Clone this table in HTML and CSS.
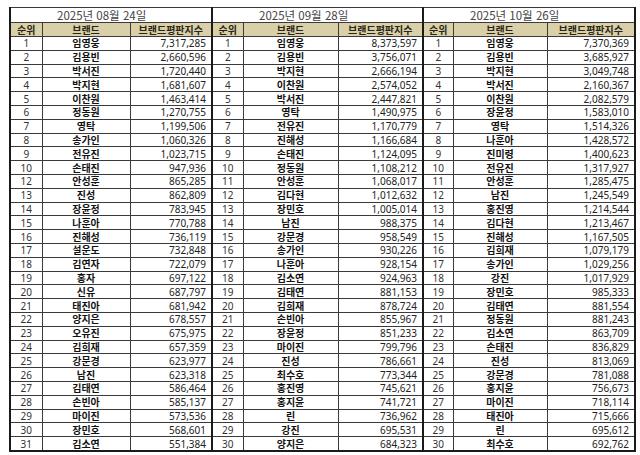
FILE: index.html
```html
<!DOCTYPE html>
<html lang="ko">
<head>
<meta charset="utf-8">
<title>브랜드평판지수</title>
<link rel="stylesheet" href="styles.css">
</head>
<body>
<div class="page">
<table class="rank-table">
<colgroup>
<col class="c-r1"><col class="c-n1"><col class="c-v1">
<col class="c-r2"><col class="c-n2"><col class="c-v2">
<col class="c-r3"><col class="c-n3"><col class="c-v3">
</colgroup>
<thead>
<tr class="title-row">
<th colspan="3" class="title">2025년 08월 24일</th>
<th colspan="3" class="title g">2025년 09월 28일</th>
<th colspan="3" class="title g">2025년 10월 26일</th>
</tr>
<tr class="head-row">
<th>순위</th><th>브랜드</th><th>브랜드평판지수</th>
<th class="g">순위</th><th>브랜드</th><th>브랜드평판지수</th>
<th class="g">순위</th><th>브랜드</th><th>브랜드평판지수</th>
</tr>
</thead>
<tbody>
<tr><td class="r">1</td><td class="n">임영웅</td><td class="v">7,317,285</td><td class="r g">1</td><td class="n">임영웅</td><td class="v">8,373,597</td><td class="r g">1</td><td class="n">임영웅</td><td class="v">7,370,369</td></tr>
<tr><td class="r">2</td><td class="n">김용빈</td><td class="v">2,660,596</td><td class="r g">2</td><td class="n">김용빈</td><td class="v">3,756,071</td><td class="r g">2</td><td class="n">김용빈</td><td class="v">3,685,927</td></tr>
<tr><td class="r">3</td><td class="n">박서진</td><td class="v">1,720,440</td><td class="r g">3</td><td class="n">박지현</td><td class="v">2,666,194</td><td class="r g">3</td><td class="n">박지현</td><td class="v">3,049,748</td></tr>
<tr><td class="r">4</td><td class="n">박지현</td><td class="v">1,681,607</td><td class="r g">4</td><td class="n">이찬원</td><td class="v">2,574,052</td><td class="r g">4</td><td class="n">박서진</td><td class="v">2,160,367</td></tr>
<tr><td class="r">5</td><td class="n">이찬원</td><td class="v">1,463,414</td><td class="r g">5</td><td class="n">박서진</td><td class="v">2,447,821</td><td class="r g">5</td><td class="n">이찬원</td><td class="v">2,082,579</td></tr>
<tr><td class="r">6</td><td class="n">정동원</td><td class="v">1,270,755</td><td class="r g">6</td><td class="n">영탁</td><td class="v">1,490,975</td><td class="r g">6</td><td class="n">장윤정</td><td class="v">1,583,010</td></tr>
<tr><td class="r">7</td><td class="n">영탁</td><td class="v">1,199,506</td><td class="r g">7</td><td class="n">전유진</td><td class="v">1,170,779</td><td class="r g">7</td><td class="n">영탁</td><td class="v">1,514,326</td></tr>
<tr><td class="r">8</td><td class="n">송가인</td><td class="v">1,060,326</td><td class="r g">8</td><td class="n">진해성</td><td class="v">1,166,684</td><td class="r g">8</td><td class="n">나훈아</td><td class="v">1,428,572</td></tr>
<tr><td class="r">9</td><td class="n">전유진</td><td class="v">1,023,715</td><td class="r g">9</td><td class="n">손태진</td><td class="v">1,124,095</td><td class="r g">9</td><td class="n">진미령</td><td class="v">1,400,623</td></tr>
<tr><td class="r">10</td><td class="n">손태진</td><td class="v">947,936</td><td class="r g">10</td><td class="n">정동원</td><td class="v">1,108,212</td><td class="r g">10</td><td class="n">전유진</td><td class="v">1,317,927</td></tr>
<tr><td class="r">12</td><td class="n">안성훈</td><td class="v">865,285</td><td class="r g">11</td><td class="n">안성훈</td><td class="v">1,068,017</td><td class="r g">11</td><td class="n">안성훈</td><td class="v">1,285,475</td></tr>
<tr><td class="r">13</td><td class="n">진성</td><td class="v">862,809</td><td class="r g">12</td><td class="n">김다현</td><td class="v">1,012,632</td><td class="r g">12</td><td class="n">남진</td><td class="v">1,245,549</td></tr>
<tr><td class="r">14</td><td class="n">장윤정</td><td class="v">783,945</td><td class="r g">13</td><td class="n">장민호</td><td class="v">1,005,014</td><td class="r g">13</td><td class="n">홍진영</td><td class="v">1,214,544</td></tr>
<tr><td class="r">15</td><td class="n">나훈아</td><td class="v">770,788</td><td class="r g">14</td><td class="n">남진</td><td class="v">988,375</td><td class="r g">14</td><td class="n">김다현</td><td class="v">1,213,467</td></tr>
<tr><td class="r">16</td><td class="n">진해성</td><td class="v">736,119</td><td class="r g">15</td><td class="n">강문경</td><td class="v">958,549</td><td class="r g">15</td><td class="n">진해성</td><td class="v">1,167,505</td></tr>
<tr><td class="r">17</td><td class="n">설운도</td><td class="v">732,848</td><td class="r g">16</td><td class="n">송가인</td><td class="v">930,226</td><td class="r g">16</td><td class="n">김희재</td><td class="v">1,079,179</td></tr>
<tr><td class="r">18</td><td class="n">김연자</td><td class="v">722,079</td><td class="r g">17</td><td class="n">나훈아</td><td class="v">928,154</td><td class="r g">17</td><td class="n">송가인</td><td class="v">1,029,256</td></tr>
<tr><td class="r">19</td><td class="n">홍자</td><td class="v">697,122</td><td class="r g">18</td><td class="n">김소연</td><td class="v">924,963</td><td class="r g">18</td><td class="n">강진</td><td class="v">1,017,929</td></tr>
<tr><td class="r">20</td><td class="n">신유</td><td class="v">687,797</td><td class="r g">19</td><td class="n">김태연</td><td class="v">881,153</td><td class="r g">19</td><td class="n">장민호</td><td class="v">985,333</td></tr>
<tr><td class="r">21</td><td class="n">태진아</td><td class="v">681,942</td><td class="r g">20</td><td class="n">김희재</td><td class="v">878,724</td><td class="r g">20</td><td class="n">김태연</td><td class="v">881,554</td></tr>
<tr><td class="r">22</td><td class="n">양지은</td><td class="v">678,557</td><td class="r g">21</td><td class="n">손빈아</td><td class="v">855,967</td><td class="r g">21</td><td class="n">정동원</td><td class="v">881,243</td></tr>
<tr><td class="r">23</td><td class="n">오유진</td><td class="v">675,975</td><td class="r g">22</td><td class="n">장윤정</td><td class="v">851,233</td><td class="r g">22</td><td class="n">김소연</td><td class="v">863,709</td></tr>
<tr><td class="r">24</td><td class="n">김희재</td><td class="v">657,359</td><td class="r g">23</td><td class="n">마이진</td><td class="v">799,796</td><td class="r g">23</td><td class="n">손태진</td><td class="v">836,829</td></tr>
<tr><td class="r">25</td><td class="n">강문경</td><td class="v">623,977</td><td class="r g">24</td><td class="n">진성</td><td class="v">786,661</td><td class="r g">24</td><td class="n">진성</td><td class="v">813,069</td></tr>
<tr><td class="r">26</td><td class="n">남진</td><td class="v">623,318</td><td class="r g">25</td><td class="n">최수호</td><td class="v">773,344</td><td class="r g">25</td><td class="n">강문경</td><td class="v">781,088</td></tr>
<tr><td class="r">27</td><td class="n">김태연</td><td class="v">586,464</td><td class="r g">26</td><td class="n">홍진영</td><td class="v">745,621</td><td class="r g">26</td><td class="n">홍지윤</td><td class="v">756,673</td></tr>
<tr><td class="r">28</td><td class="n">손빈아</td><td class="v">585,137</td><td class="r g">27</td><td class="n">홍지윤</td><td class="v">741,721</td><td class="r g">27</td><td class="n">마이진</td><td class="v">718,114</td></tr>
<tr><td class="r">29</td><td class="n">마이진</td><td class="v">573,536</td><td class="r g">28</td><td class="n">린</td><td class="v">736,962</td><td class="r g">28</td><td class="n">태진아</td><td class="v">715,666</td></tr>
<tr><td class="r">30</td><td class="n">장민호</td><td class="v">568,601</td><td class="r g">29</td><td class="n">강진</td><td class="v">695,531</td><td class="r g">29</td><td class="n">린</td><td class="v">695,612</td></tr>
<tr><td class="r">31</td><td class="n">김소연</td><td class="v">551,384</td><td class="r g">30</td><td class="n">양지은</td><td class="v">684,323</td><td class="r g">30</td><td class="n">최수호</td><td class="v">692,762</td></tr>
</tbody>
</table>
</div>
</body>
</html>
```
FILE: styles.css
```css
html, body {
  margin: 0;
  padding: 0;
  background: #ffffff;
}

.page {
  padding: 7px 0 0 9px;
}

.rank-table {
  border-collapse: collapse;
  table-layout: fixed;
  width: 625px;
  border-left: 2px solid #1a1a1a;
  border-right: 2px solid #1a1a1a;
  border-bottom: 2px solid #1a1a1a;
  border-top: 1px solid #333333;
  font-family: "Noto Sans CJK KR", "Noto Sans", sans-serif;
  color: #222222;
}

.c-r1 { width: 32px; }
.c-n1 { width: 88px; }
.c-v1 { width: 82px; }
.c-r2 { width: 31px; }
.c-n2 { width: 95px; }
.c-v2 { width: 85px; }
.c-r3 { width: 30px; }
.c-n3 { width: 94px; }
.c-v3 { width: 88px; }

.rank-table th,
.rank-table td {
  padding: 0;
  border: 1px solid #3a3a3a;
  overflow: hidden;
  white-space: nowrap;
  line-height: 12px;
  vertical-align: middle;
}

.rank-table .g {
  border-left: 2px solid #1a1a1a;
}

.title {
  height: 14px;
  text-align: left;
  padding-left: 46px !important;
  font-weight: normal;
  font-size: 11.5px;
  line-height: 13px !important;
  color: #444444;
}

.head-row th {
  height: 13px;
  background: #d9d0a9;
  font-size: 10px;
  font-weight: bold;
  color: #2a2418;
  text-align: center;
}

.rank-table tbody td {
  height: 12.8px;
}

.r {
  text-align: center;
  font-family: "Noto Sans", sans-serif;
  font-size: 10px;
  color: #333333;
}

.n {
  text-align: center;
  font-weight: bold;
  font-size: 10px;
  color: #111111;
}

.v {
  text-align: right;
  padding-right: 5px !important;
  font-family: "Noto Sans", sans-serif;
  font-size: 10px;
  color: #222222;
}
```
